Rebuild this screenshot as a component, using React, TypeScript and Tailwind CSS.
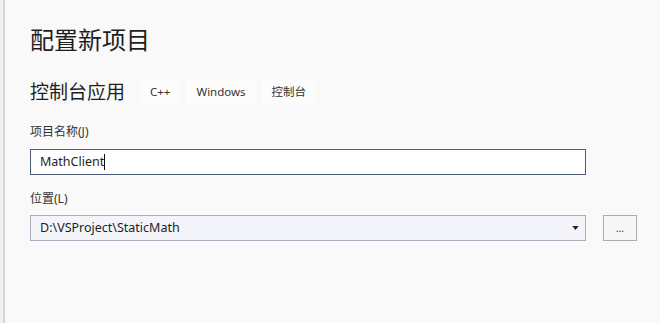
export default function App() {
  const tags = ['C++', 'Windows', '控制台']
  return (
    <div className="flex h-[323px] w-[660px] bg-[#f9f9f9] text-[#1e1e1e]" style={{ fontFamily: '"Noto Sans", "Noto Sans CJK SC", sans-serif' }}>
      <div className="w-[3px] bg-[#f0f0f0]" />
      <div className="w-[2px] bg-[#d6d6d6]" />
      <div className="flex-1 pl-[25px] pr-[23px]">
        <h1 className="mt-[23px] h-[34px] text-[24px] leading-[34px] font-normal">配置新项目</h1>
        <div className="mt-[21px] flex items-center h-[28px]">
          <span className="text-[19px] leading-[28px]">控制台应用</span>
          <div className="ml-[15px] flex gap-[6px]">
            {tags.map((t) => (
              <span key={t} className="h-[26px] px-[10px] flex items-center bg-[#fcfcfc] rounded-[3px] text-[11.5px] text-[#333]">
                {t}
              </span>
            ))}
          </div>
        </div>
        <div className="mt-[18px] text-[12px] leading-[16px] text-[#333]">项目名称(J)</div>
        <div className="mt-[9px] flex">
          <div className="h-[26px] w-[556px] border border-[#4d5a78] bg-white flex items-center pl-[9px] text-[12.5px]">
            MathClient<span className="w-px h-[16px] bg-[#111]" />
          </div>
        </div>
        <div className="mt-[16px] text-[12px] leading-[16px] text-[#333]">位置(L)</div>
        <div className="mt-[8px] flex">
          <div className="h-[26px] w-[556px] border border-[#a9aebd] bg-[#f3f5fb] flex items-center pl-[9px] pr-[6px] text-[12.5px]">
            <span className="flex-1">D:\VSProject\StaticMath</span>
            <svg width="7" height="4" viewBox="0 0 8 5"><path d="M0 0h8L4 5z" fill="#222" /></svg>
          </div>
          <div className="ml-[17px] h-[26px] w-[34px] border border-[#adadad] bg-[#f7f7f7] flex items-center justify-center text-[10px] text-[#333]">...</div>
        </div>
      </div>
    </div>
  )
}
